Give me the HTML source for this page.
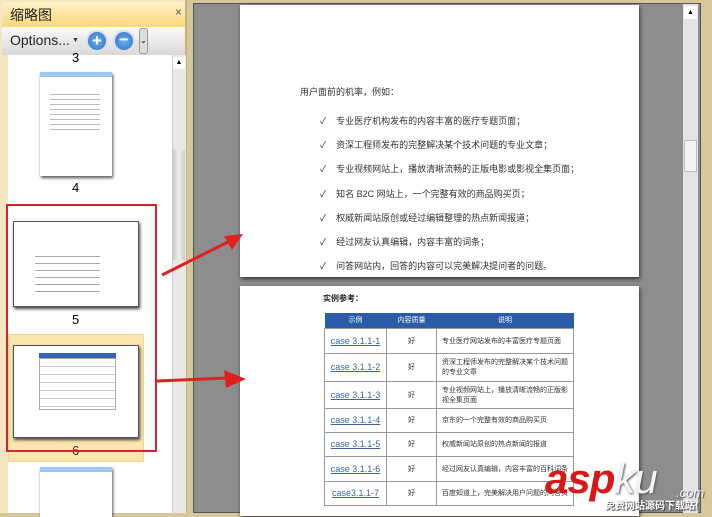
<!DOCTYPE html>
<html><head><meta charset="utf-8"><style>
*{margin:0;padding:0;box-sizing:border-box}
body{width:712px;height:513px;overflow:hidden;position:relative;background:#d8c79a;font-family:"Liberation Sans","Noto Sans CJK SC",sans-serif}
.a{position:absolute}
.cn{font-family:"Liberation Sans","Noto Sans CJK SC",sans-serif}
</style></head><body>
<div class="a" style="left:0;top:0;width:187px;height:513px;background:#f3e6c2;border-right:2px solid #c9b27a"></div>
<div class="a" style="left:2px;top:2px;width:183px;height:25px;background:linear-gradient(#fff1c8,#fbd97a)"></div>
<div class="a cn" style="left:10px;top:5px;font-size:14px;color:#222">缩略图</div>
<div class="a" style="left:175px;top:5px;font-size:12px;color:#555">×</div>
<div class="a" style="left:2px;top:27px;width:183px;height:28px;background:linear-gradient(#fafafa,#d8d8d8)"></div>
<div class="a" style="left:10px;top:32px;font-size:14px;color:#222">Options...</div>
<div class="a" style="left:72px;top:37px;font-size:7px;color:#333">▼</div>
<div class="a" style="left:86px;top:30px;width:22px;height:22px;border-radius:50%;background:radial-gradient(#6fb0ef,#2b6fc8);border:2px solid #dde;color:#fff;font-weight:bold;font-size:17px;line-height:17px;text-align:center">+</div>
<div class="a" style="left:113px;top:30px;width:22px;height:22px;border-radius:50%;background:radial-gradient(#6fb0ef,#2b6fc8);border:2px solid #dde;color:#fff;font-weight:bold;font-size:17px;line-height:16px;text-align:center">−</div>
<div class="a" style="left:139px;top:28px;width:9px;height:26px;background:#ddd;border:1px solid #999;border-radius:3px;font-size:8px;text-align:center;line-height:24px">⌄</div>
<div class="a" style="left:8px;top:55px;width:164px;height:458px;background:#fff"></div>
<div class="a" style="left:172px;top:55px;width:14px;height:458px;background:#e8e8e8;border-left:1px solid #ccc"></div>
<div class="a" style="left:173px;top:57px;width:12px;height:12px;background:#fff;font-size:7px;text-align:center;line-height:12px">▲</div>
<div class="a" style="left:173px;top:150px;width:12px;height:110px;background:linear-gradient(90deg,#ccc,#eee,#ccc)"></div>
<div class="a" style="left:72px;top:50px;font-size:13px">3</div>
<div class="a" style="left:40px;top:72px;width:72px;height:104px;background:#fff;box-shadow:1px 2px 3px #555;border-top:5px solid #9cc8ee"></div>
<div class="a" style="left:50px;top:90px;width:50px;height:40px;background:repeating-linear-gradient(#fff 0 4px,#bbb 4px 5px)"></div>
<div class="a" style="left:72px;top:180px;font-size:13px">4</div>
<div class="a" style="left:8px;top:334px;width:136px;height:128px;background:#fbe6b0;border:1px solid #f0d58c"></div>
<div class="a" style="left:13px;top:221px;width:126px;height:86px;background:#fff;box-shadow:1px 2px 3px #444;border:1px solid #555"></div>
<div class="a" style="left:35px;top:250px;width:65px;height:45px;background:repeating-linear-gradient(#fff 0 6px,#aaa 6px 7px)"></div>
<div class="a" style="left:72px;top:312px;font-size:13px">5</div>
<div class="a" style="left:13px;top:345px;width:126px;height:93px;background:#fff;box-shadow:1px 2px 3px #444;border:1px solid #555"></div>
<div class="a" style="left:39px;top:353px;width:77px;height:5px;background:#3465b5"></div>
<div class="a" style="left:39px;top:358px;width:77px;height:52px;border:1px solid #aaa;background:repeating-linear-gradient(#fff 0 7px,#ccc 7px 8px)"></div>
<div class="a" style="left:72px;top:443px;font-size:13px;color:#333">6</div>
<div class="a" style="left:6px;top:204px;width:151px;height:248px;border:2px solid #d4262a"></div>
<div class="a" style="left:40px;top:467px;width:72px;height:50px;background:#fff;box-shadow:1px 2px 3px #555;border-top:5px solid #9cc8ee"></div>
<div class="a" style="left:193px;top:3px;width:508px;height:510px;background:#8d8d8d;border:1px solid #555"></div>
<div class="a" style="left:683px;top:4px;width:15px;height:509px;background:#e4e4e4"></div>
<div class="a" style="left:684px;top:6px;width:13px;height:13px;background:#fff;font-size:7px;text-align:center;line-height:13px">▲</div>
<div class="a" style="left:684px;top:140px;width:13px;height:32px;background:#f3f3f3;border:1px solid #bbb"></div>
<div class="a" style="left:240px;top:5px;width:399px;height:272px;background:#fff;box-shadow:1px 2px 4px #333"></div>
<div class="a cn" style="left:300px;top:85px;font-size:9px;color:#333">用户面前的机率，例如：</div>
<div class="a cn" style="left:320px;top:109px;font-size:9px;line-height:24.2px;color:#333;white-space:pre">✓    专业医疗机构发布的内容丰富的医疗专题页面；
✓    资深工程师发布的完整解决某个技术问题的专业文章；
✓    专业视频网站上，播放清晰流畅的正版电影或影视全集页面；
✓    知名 B2C 网站上，一个完整有效的商品购买页；
✓    权威新闻站原创或经过编辑整理的热点新闻报道；
✓    经过网友认真编辑，内容丰富的词条；
✓    问答网站内，回答的内容可以完美解决提问者的问题。</div>
<div class="a" style="left:240px;top:286px;width:399px;height:230px;background:#fff;box-shadow:1px 2px 4px #333"></div>
<div class="a cn" style="left:323px;top:293px;font-size:8px;font-weight:bold;color:#222">实例参考：</div>
<table class="a cn" style="left:324px;top:313px;width:250px;border-collapse:collapse;font-size:7px;color:#333">
<tr style="height:15px;background:#2a5ca9;color:#fff"><td style="width:62px;text-align:center">示例</td><td style="width:50px;text-align:center">内容质量</td><td style="text-align:center">说明</td></tr>
<tbody style="border:1px solid #999">
<tr style="height:25px"><td style="border:1px solid #999;text-align:center;color:#3d63a6;font-size:9px;text-decoration:underline">case 3.1.1-1</td><td style="border:1px solid #999;text-align:center">好</td><td style="border:1px solid #999;padding-left:5px">专业医疗网站发布的丰富医疗专题页面</td></tr>
<tr style="height:28px"><td style="border:1px solid #999;text-align:center;color:#3d63a6;font-size:9px;text-decoration:underline">case 3.1.1-2</td><td style="border:1px solid #999;text-align:center">好</td><td style="border:1px solid #999;padding-left:5px">资深工程师发布的完整解决某个技术问题的专业文章</td></tr>
<tr style="height:27px"><td style="border:1px solid #999;text-align:center;color:#3d63a6;font-size:9px;text-decoration:underline">case 3.1.1-3</td><td style="border:1px solid #999;text-align:center">好</td><td style="border:1px solid #999;padding-left:5px">专业视频网站上，播放清晰流畅的正版影视全集页面</td></tr>
<tr style="height:24px"><td style="border:1px solid #999;text-align:center;color:#3d63a6;font-size:9px;text-decoration:underline">case 3.1.1-4</td><td style="border:1px solid #999;text-align:center">好</td><td style="border:1px solid #999;padding-left:5px">京东的一个完整有效的商品购买页</td></tr>
<tr style="height:24px"><td style="border:1px solid #999;text-align:center;color:#3d63a6;font-size:9px;text-decoration:underline">case 3.1.1-5</td><td style="border:1px solid #999;text-align:center">好</td><td style="border:1px solid #999;padding-left:5px">权威新闻站原创的热点新闻的报道</td></tr>
<tr style="height:25px"><td style="border:1px solid #999;text-align:center;color:#3d63a6;font-size:9px;text-decoration:underline">case 3.1.1-6</td><td style="border:1px solid #999;text-align:center">好</td><td style="border:1px solid #999;padding-left:5px">经过网友认真编辑，内容丰富的百科词条</td></tr>
<tr style="height:24px"><td style="border:1px solid #999;text-align:center;color:#3d63a6;font-size:9px;text-decoration:underline">case3.1.1-7</td><td style="border:1px solid #999;text-align:center">好</td><td style="border:1px solid #999;padding-left:5px">百度知道上，完美解决用户问题的问答页</td></tr>
</tbody></table>
<svg class="a" style="left:0;top:0" width="712" height="513">
<line x1="162" y1="275" x2="230" y2="241" stroke="#e02020" stroke-width="3"/>
<polygon points="243,234 224,236 232,250" fill="#e02020"/>
<line x1="157" y1="381" x2="228" y2="378" stroke="#e02020" stroke-width="3"/>
<polygon points="246,379 224,370 226,388" fill="#e02020"/>
</svg>
<div class="a" style="left:545px;top:458px;font-size:42px;font-weight:bold;font-style:italic;color:#d81818;letter-spacing:-1px;line-height:42px">asp<span style="color:#f4f4f4;font-weight:normal;text-shadow:1px 1px 2px #555">ku</span></div>
<div class="a" style="left:676px;top:485px;font-size:13px;color:#f4f4f4;font-style:italic;text-shadow:1px 1px 1px #555">.com</div>
<div class="a cn" style="left:605px;top:497px;font-size:10px;color:#fff;font-weight:bold;text-shadow:1px 1px 1px #333">免费网站源码下载站!</div>
</body></html>
